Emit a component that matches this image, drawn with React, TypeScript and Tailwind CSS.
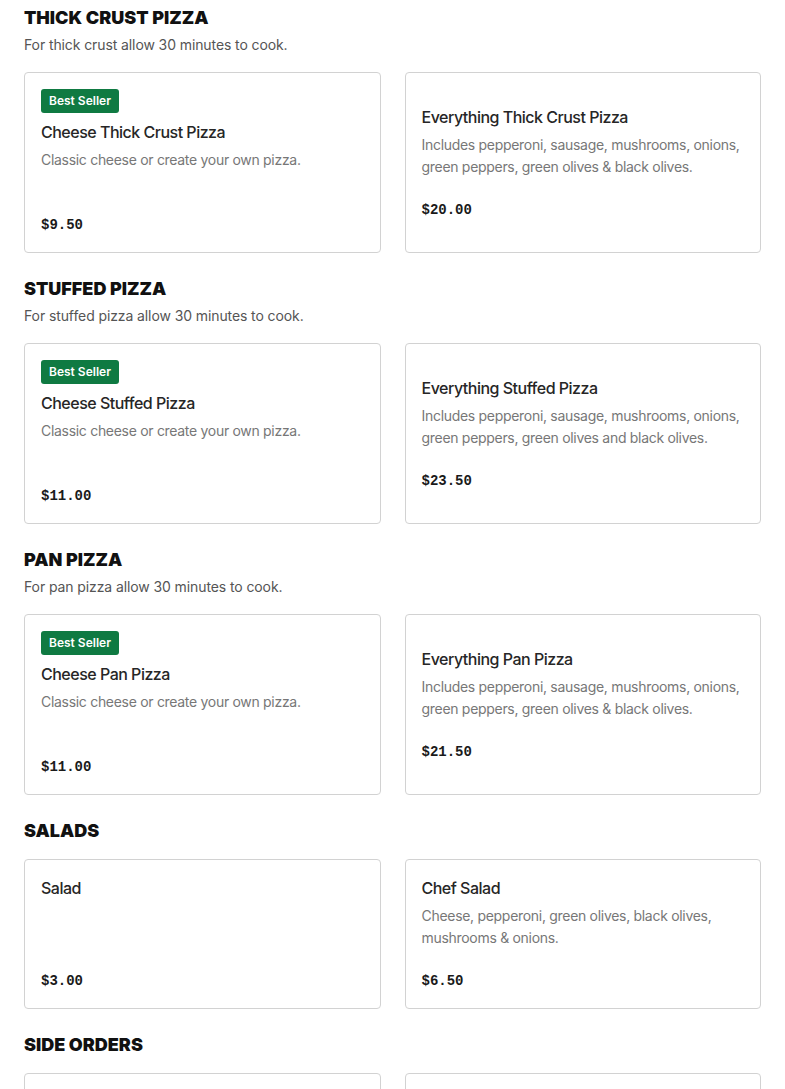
type Item = {
  name: string;
  desc?: string;
  price: string;
  bestSeller?: boolean;
};

type Section = {
  title: string;
  note?: string;
  items: Item[];
};

const sections: Section[] = [
  {
    title: "THICK CRUST PIZZA",
    note: "For thick crust allow 30 minutes to cook.",
    items: [
      {
        name: "Cheese Thick Crust Pizza",
        desc: "Classic cheese or create your own pizza.",
        price: "$9.50",
        bestSeller: true,
      },
      {
        name: "Everything Thick Crust Pizza",
        desc: "Includes pepperoni, sausage, mushrooms, onions, green peppers, green olives & black olives.",
        price: "$20.00",
      },
    ],
  },
  {
    title: "STUFFED PIZZA",
    note: "For stuffed pizza allow 30 minutes to cook.",
    items: [
      {
        name: "Cheese Stuffed Pizza",
        desc: "Classic cheese or create your own pizza.",
        price: "$11.00",
        bestSeller: true,
      },
      {
        name: "Everything Stuffed Pizza",
        desc: "Includes pepperoni, sausage, mushrooms, onions, green peppers, green olives and black olives.",
        price: "$23.50",
      },
    ],
  },
  {
    title: "PAN PIZZA",
    note: "For pan pizza allow 30 minutes to cook.",
    items: [
      {
        name: "Cheese Pan Pizza",
        desc: "Classic cheese or create your own pizza.",
        price: "$11.00",
        bestSeller: true,
      },
      {
        name: "Everything Pan Pizza",
        desc: "Includes pepperoni, sausage, mushrooms, onions, green peppers, green olives & black olives.",
        price: "$21.50",
      },
    ],
  },
  {
    title: "SALADS",
    items: [
      { name: "Salad", price: "$3.00" },
      {
        name: "Chef Salad",
        desc: "Cheese, pepperoni, green olives, black olives, mushrooms & onions.",
        price: "$6.50",
      },
    ],
  },
  {
    title: "SIDE ORDERS",
    items: [
      { name: "Garlic Bread", desc: "Served with marinara sauce.", price: "$4.00" },
      { name: "Breadsticks", desc: "Served with marinara sauce.", price: "$4.50" },
    ],
  },
];

export default function App() {
  return (
    <div className="bg-white px-6 pt-[6px] pb-10 font-['Inter',sans-serif]">
      {sections.map((s, i) => (
        <section key={s.title} className={i > 0 ? "mt-6" : ""}>
          <h2 className="text-[18px] leading-6 font-black text-[#111]">
            {s.title}
          </h2>
          {s.note && (
            <p className="mt-1 text-[14px] leading-[22px] tracking-[-0.1px] text-[#555]">
              {s.note}
            </p>
          )}
          <div className="mt-4 grid grid-cols-2 gap-6">
            {s.items.map((item) => (
              <MenuCard key={item.name} item={item} />
            ))}
          </div>
        </section>
      ))}
    </div>
  );
}

function MenuCard({ item }: { item: Item }) {
  return (
    <div className="flex flex-col justify-center rounded-[4px] border border-[#d2d2d2] bg-white px-4 pt-4 pb-[17px]">
      {item.bestSeller && (
        <span className="mb-[7px] self-start rounded-[3px] bg-[#0f7a42] px-2 text-[12px] leading-6 font-semibold text-white">
          Best Seller
        </span>
      )}
      <h3 className="text-[16px] leading-6 font-medium tracking-[-0.5px] text-[#262626]">
        {item.name}
      </h3>
      <p className="mt-[5px] min-h-[44px] text-[14px] leading-[22px] tracking-[-0.3px] text-[#777]">
        {item.desc}
      </p>
      <div className="mt-[22px] font-['Liberation_Mono',monospace] text-[14px] leading-5 font-bold text-[#1a1a1a]">
        {item.price}
      </div>
    </div>
  );
}
